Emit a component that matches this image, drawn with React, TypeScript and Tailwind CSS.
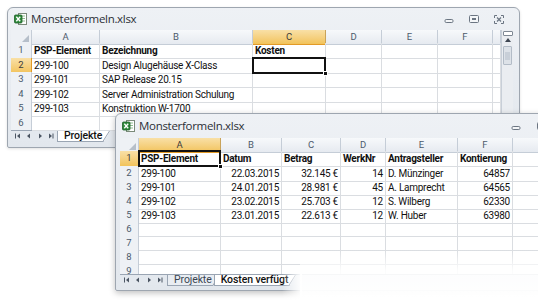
import React from "react";

const cellFont = "font-['Roboto',sans-serif] text-[10px] tracking-[-0.25px]";

function ExcelIcon() {
  return (
    <svg width="13" height="12" viewBox="0 0 13 12">
      <rect x="4.5" y="0.5" width="8" height="11" fill="#ffffff" stroke="#7a8a7a" strokeWidth="1" />
      <line x1="7" y1="3" x2="11" y2="3" stroke="#8fbf8f" />
      <line x1="7" y1="5.5" x2="11" y2="5.5" stroke="#8fbf8f" />
      <line x1="7" y1="8" x2="11" y2="8" stroke="#8fbf8f" />
      <rect x="0.5" y="2" width="7.5" height="8" rx="1" fill="#2f8a3c" stroke="#1d5e27" strokeWidth="0.8" />
      <path d="M2.3 3.8 L6.2 8.2 M6.2 3.8 L2.3 8.2" stroke="#ffffff" strokeWidth="1.3" />
    </svg>
  );
}

function MinIcon() {
  return (
    <svg width="10" height="8" viewBox="0 0 10 8">
      <rect x="1" y="3.5" width="8" height="3" rx="1.2" fill="#f4f6f8" stroke="#6b7582" strokeWidth="1" />
    </svg>
  );
}

function RestoreIcon() {
  return (
    <svg width="10" height="9" viewBox="0 0 10 9">
      <rect x="0.5" y="0.5" width="9" height="7" rx="1" fill="#f4f6f8" stroke="#6b7582" strokeWidth="1" />
      <rect x="3" y="3" width="4" height="2" fill="#6b7582" />
    </svg>
  );
}

function CloseIcon() {
  return (
    <svg width="10" height="9" viewBox="0 0 10 9">
      <path d="M0.5 3 V0.5 H3 M7 0.5 H9.5 V3 M9.5 6 V8.5 H7 M3 8.5 H0.5 V6" fill="none" stroke="#6b7582" strokeWidth="1" />
      <path d="M3 2.5 L7 6.5 M7 2.5 L3 6.5" stroke="#6b7582" strokeWidth="1.2" />
    </svg>
  );
}

function NavButtons() {
  return (
    <svg width="40" height="8" viewBox="0 0 40 8">
      <rect x="1" y="1.5" width="1" height="5" fill="#4b5563" />
      <path d="M6 1.5 L3 4 L6 6.5 Z" fill="#4b5563" />
      <path d="M16 1.5 L13 4 L16 6.5 Z" fill="#4b5563" />
      <path d="M25 1.5 L28 4 L25 6.5 Z" fill="#4b5563" />
      <path d="M35 1.5 L38 4 L35 6.5 Z" fill="#4b5563" />
      <rect x="38.5" y="1.5" width="1" height="5" fill="#4b5563" />
    </svg>
  );
}

function Corner() {
  return (
    <div className="flex items-end justify-end h-full pr-[2px] pb-[2px]">
      <svg width="7" height="7" viewBox="0 0 7 7">
        <path d="M7 0 L7 7 L0 7 Z" fill="#b6bfca" />
      </svg>
    </div>
  );
}

function ColHead({ label, selected }: { label: string; selected?: boolean }) {
  return (
    <div
      className={
        "flex items-center justify-center border-r border-b text-[9.5px] font-['Roboto',sans-serif] " +
        (selected
          ? "bg-gradient-to-b from-[#f9e0a6] to-[#f2c35a] border-[#c9a35a] text-[#3b3b3b] border-b-[#e29a27]"
          : "bg-gradient-to-b from-[#f7f9fb] to-[#e6eaf0] border-[#c5cdd7] text-[#4c5a6c]")
      }
    >
      {label}
    </div>
  );
}

function RowHead({ label, selected }: { label: string; selected?: boolean }) {
  return (
    <div
      className={
        "flex items-center justify-center border-r border-b text-[9.5px] font-['Roboto',sans-serif] " +
        (selected
          ? "bg-gradient-to-b from-[#f9e0a6] to-[#f2c35a] border-[#c9a35a] text-[#3b3b3b] border-r-[#e29a27]"
          : "bg-[#eef1f5] border-[#c5cdd7] text-[#4c5a6c]")
      }
    >
      {label}
    </div>
  );
}

type CellProps = {
  text?: string;
  bold?: boolean;
  right?: boolean;
  selected?: boolean;
};

function Cell({ text, bold, right, selected }: CellProps) {
  return (
    <div
      className={
        "relative flex items-center border-r border-b border-[#dadde1] px-[2px] whitespace-nowrap text-[#111] " +
        cellFont +
        (bold ? " font-bold" : "") +
        (right ? " justify-end" : "")
      }
    >
      {text}
      {selected && (
        <>
          <div className="absolute left-[-1px] top-[-1px] right-[-1px] bottom-[-1px] border-2 border-[#111] z-10" />
          <div className="absolute right-[-3px] bottom-[-3px] w-[5px] h-[5px] bg-[#111] border border-white z-20" />
        </>
      )}
    </div>
  );
}

function Tab({ label, active }: { label: string; active?: boolean }) {
  return (
    <div className="relative h-[11px] flex items-stretch">
      <div
        className={
          "h-full flex items-center pl-[6px] pr-[8px] border-b border-l border-[#9aa5b3] " +
          "[clip-path:polygon(0_0,100%_0,calc(100%-7px)_100%,0_100%)] " +
          (active ? "bg-white text-[#111] font-medium" : "bg-[#e9edf2] text-[#3b4652]")
        }
      >
        <span className="font-['Roboto',sans-serif] text-[10.5px] leading-none tracking-[-0.1px]">{label}</span>
      </div>
      <svg className="absolute right-[0px] top-0" width="8" height="11" viewBox="0 0 8 11">
        <path d="M7.5 0 L0.5 11" stroke="#9aa5b3" strokeWidth="1" />
      </svg>
    </div>
  );
}

function TitleBar({ h, controls }: { h: string; controls: React.ReactNode }) {
  return (
    <div className={"flex items-center pl-[6px] " + h}>
      <ExcelIcon />
      <span className="ml-[4px] font-['Open_Sans',sans-serif] text-[11.5px] tracking-[-0.3px] text-[#2b2f36]">
        Monsterformeln.xlsx
      </span>
      <div className="flex-1" />
      {controls}
    </div>
  );
}

const w1Rows: { n: string; a: string; b: string; sel?: boolean; bold?: boolean }[] = [
  { n: "1", a: "PSP-Element", b: "Bezeichnung", bold: true },
  { n: "2", a: "299-100", b: "Design Alugehäuse X-Class", sel: true },
  { n: "3", a: "299-101", b: "SAP Release 20.15" },
  { n: "4", a: "299-102", b: "Server Administration Schulung" },
  { n: "5", a: "299-103", b: "Konstruktion W-1700" },
  { n: "6", a: "", b: "" },
];

function Window1() {
  const grid = "grid grid-cols-[21px_68px_153px_73px_56px_56px_55px_8px]";
  return (
    <div className="absolute left-[7px] top-[7px] w-[513px] h-[141px] rounded-t-[6px] rounded-b-[2px] border border-[#9ea6b0] bg-gradient-to-b from-[#eef1f5] to-[#e2e7ed] flex flex-col shadow-[0_1px_3px_rgba(0,0,0,0.12)]">
      <TitleBar
        h="h-[22px]"
        controls={
          <div className="flex items-center gap-[15px] pr-[15px] pt-[1px]">
            <MinIcon />
            <RestoreIcon />
            <CloseIcon />
          </div>
        }
      />
      <div className="flex pl-[3px] pr-[6px]">
        <div className="flex flex-col w-[490px] bg-white">
          <div className={grid + " h-[13px]"}>
            <div className="border-r border-b border-[#c5cdd7] bg-[#eef1f5]">
              <Corner />
            </div>
            <ColHead label="A" />
            <ColHead label="B" />
            <ColHead label="C" selected />
            <ColHead label="D" />
            <ColHead label="E" />
            <ColHead label="F" />
            <ColHead label="" />
          </div>
          {w1Rows.map((r) => (
            <div key={r.n} className={grid + " h-[14.5px]"}>
              <RowHead label={r.n} selected={r.sel} />
              <Cell text={r.a} bold={r.bold} />
              <Cell text={r.b} bold={r.bold} />
              <Cell text={r.n === "1" ? "Kosten" : ""} bold={r.bold} selected={r.sel} />
              <Cell />
              <Cell />
              <Cell />
              <Cell />
            </div>
          ))}
          <div className="h-[11px] flex items-start bg-[#e3e8ee] border-t border-[#9aa5b3]">
            <div className="pl-[3px] pr-[3px] h-[10px] flex items-center">
              <NavButtons />
            </div>
            <Tab label="Projekte" active />
          </div>
        </div>
        <div className="w-[12px] h-[100px] bg-[#eaedf1] border-l border-[#c8cfd8] flex flex-col items-center">
          <div className="mt-[1px] w-[10px] h-[5px] border border-[#7e8894] bg-white rounded-[1px]" />
          <svg className="mt-[2px]" width="6" height="4" viewBox="0 0 6 4">
            <path d="M0 4 L3 0 L6 4 Z" fill="#3e4652" />
          </svg>
          <div className="mt-[4px] w-[9px] h-[19px] bg-[#dde2e8] border border-[#b3bcc7] rounded-[1px] flex items-center justify-center">
            <div className="w-[5px] h-[8px] bg-[#c8cfd8]" />
          </div>
        </div>
      </div>
    </div>
  );
}

const w2Rows: { n: string; c: string[]; bold?: boolean }[] = [
  { n: "1", c: ["PSP-Element", "Datum", "Betrag", "WerkNr", "Antragsteller", "Kontierung"], bold: true },
  { n: "2", c: ["299-100", "22.03.2015", "32.145 €", "14", "D. Münzinger", "64857"] },
  { n: "3", c: ["299-101", "24.01.2015", "28.981 €", "45", "A. Lamprecht", "64565"] },
  { n: "4", c: ["299-102", "23.02.2015", "25.703 €", "12", "S. Wilberg", "62330"] },
  { n: "5", c: ["299-103", "23.01.2015", "22.613 €", "12", "W. Huber", "63980"] },
  { n: "6", c: ["", "", "", "", "", ""] },
  { n: "7", c: ["", "", "", "", "", ""] },
  { n: "8", c: ["", "", "", "", "", ""] },
];

function Window2() {
  const grid = "grid grid-cols-[19px_82px_61px_59px_45px_72px_55px_80px]";
  const rightCols = [false, true, true, true, false, true];
  return (
    <div className="absolute left-[115px] top-[113px] w-[470px] h-[178px] rounded-t-[6px] rounded-b-[2px] border border-[#9ea6b0] bg-gradient-to-b from-[#eef1f5] to-[#e2e7ed] flex flex-col shadow-[0_2px_6px_rgba(0,0,0,0.25)]">
      <TitleBar
        h="h-[24px]"
        controls={
          <div className="flex items-center gap-[16px] pr-[37px] pt-[1px]">
            <MinIcon />
            <RestoreIcon />
          </div>
        }
      />
      <div className="flex pl-[4px]">
        <div className="flex flex-col w-[473px] bg-white">
          <div className={grid + " h-[13px]"}>
            <div className="border-r border-b border-[#c5cdd7] bg-[#eef1f5]">
              <Corner />
            </div>
            <ColHead label="A" selected />
            <ColHead label="B" />
            <ColHead label="C" />
            <ColHead label="D" />
            <ColHead label="E" />
            <ColHead label="F" />
            <ColHead label="" />
          </div>
          {w2Rows.map((r) => (
            <div key={r.n} className={grid + (r.n === "1" ? " h-[15px]" : " h-[14px]")}>
              <RowHead label={r.n} selected={r.n === "1"} />
              {r.c.map((t, i) => (
                <Cell
                  key={i}
                  text={t}
                  bold={r.bold}
                  right={!r.bold && rightCols[i]}
                  selected={r.n === "1" && i === 0}
                />
              ))}
              <Cell />
            </div>
          ))}
          <div className={grid + " h-[10px] overflow-hidden items-start"}>
            <div className="h-[14px] flex items-center justify-center bg-[#eef1f5] border-r border-[#c5cdd7] text-[9.5px] leading-[14px] font-['Roboto',sans-serif] text-[#4c5a6c]">
              9
            </div>
            <div className="h-[14px] border-r border-[#dadde1]" />
            <div className="h-[14px] border-r border-[#dadde1]" />
            <div className="h-[14px] border-r border-[#dadde1]" />
            <div className="h-[14px] border-r border-[#dadde1]" />
            <div className="h-[14px] border-r border-[#dadde1]" />
            <div className="h-[14px] border-r border-[#dadde1]" />
            <div className="h-[14px] border-r border-[#dadde1]" />
          </div>
          <div className="h-[11px] flex items-start bg-[#e3e8ee] border-t border-[#9aa5b3]">
            <div className="pl-[3px] pr-[4px] h-[10px] flex items-center">
              <NavButtons />
            </div>
            <Tab label="Projekte" />
            <div className="-ml-[6px]">
              <Tab label="Kosten verfügt" active />
            </div>
          </div>
        </div>
      </div>
    </div>
  );
}

export default function App() {
  return (
    <div className="relative w-[538px] h-[302px] overflow-hidden bg-white">
      <Window1 />
      <Window2 />
      <div className="absolute left-[300px] right-0 top-[250px] bottom-0 bg-gradient-to-b from-white/0 via-white/90 via-40% to-white z-30" />
      <div className="absolute left-[282px] w-[20px] top-[266px] bottom-0 bg-gradient-to-r from-white/0 to-white z-30" />
    </div>
  );
}
